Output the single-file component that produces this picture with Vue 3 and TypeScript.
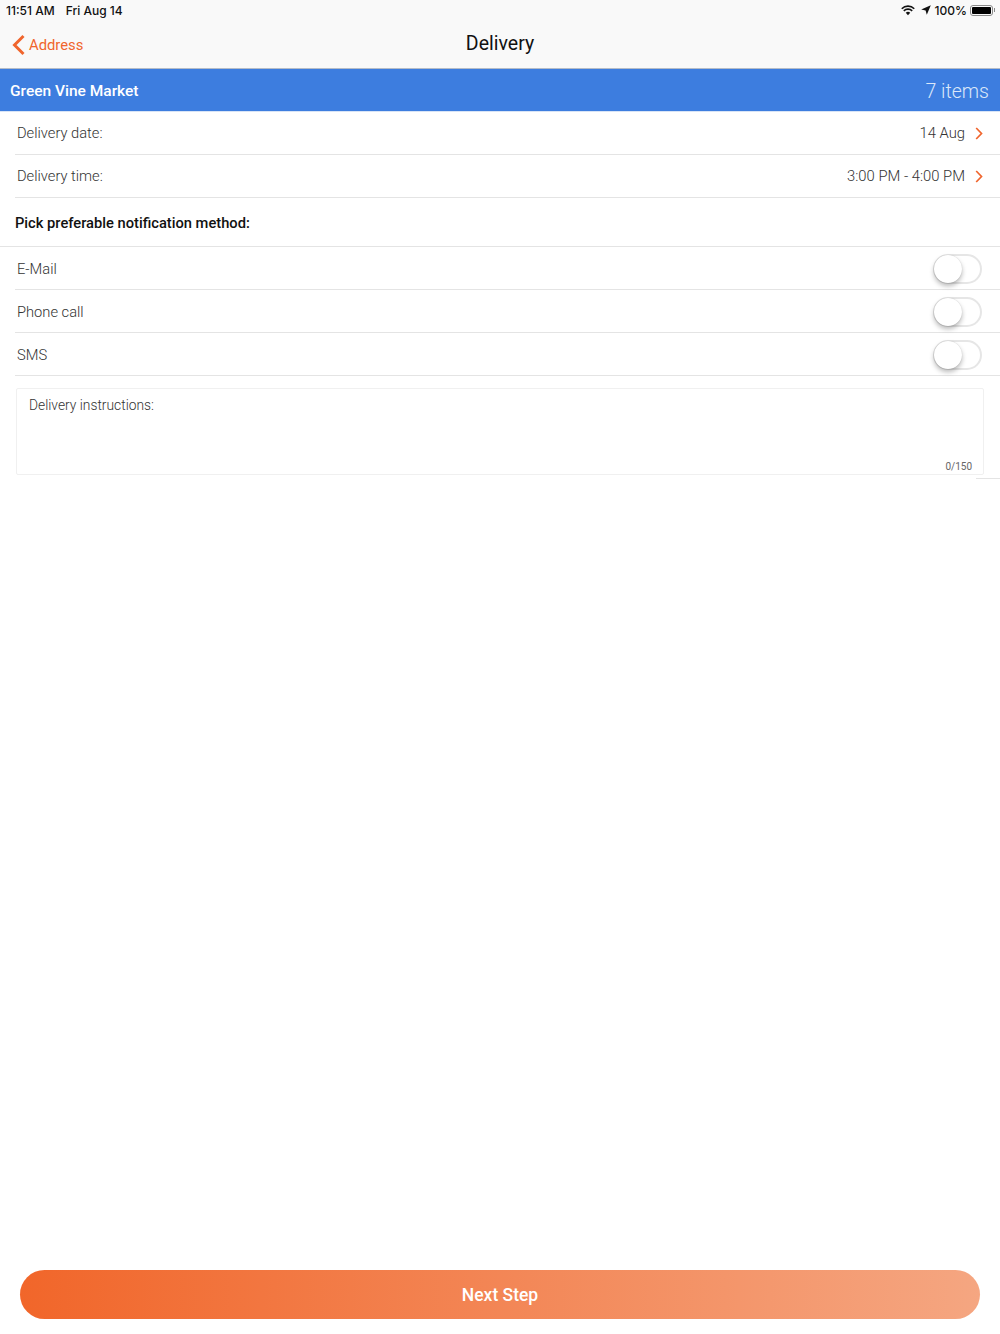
<script setup lang="ts">
interface PickerRow {
  label: string
  value: string
}

const pickers: PickerRow[] = [
  { label: 'Delivery date:', value: '14 Aug' },
  { label: 'Delivery time:', value: '3:00 PM - 4:00 PM' },
]

const methods: string[] = ['E-Mail', 'Phone call', 'SMS']
</script>

<template>
  <div class="page">
    <div class="top-bar">
      <div class="status-bar">
        <div class="status-left">
          <span>11:51 AM</span>
          <span>Fri Aug 14</span>
        </div>
        <div class="status-right">
          <svg width="14" height="11" viewBox="0 0 15 11">
            <path d="M0.8 3.6a9.5 9.5 0 0 1 13.4 0" fill="none" stroke="#111" stroke-width="1.7" />
            <path d="M3 5.9a6.4 6.4 0 0 1 9 0" fill="none" stroke="#111" stroke-width="1.7" />
            <path d="M5.1 8a3.4 3.4 0 0 1 4.8 0L7.5 10.6z" fill="#111" />
          </svg>
          <svg class="arrow" width="10" height="10" viewBox="0 0 10 10">
            <path d="M9.8 0.2L5.8 9.8 4.6 5.4 0.2 4.4z" fill="#111" />
          </svg>
          <span class="battery-text">100%</span>
          <div class="battery"><div class="battery-fill"></div></div>
          <div class="battery-cap"></div>
        </div>
      </div>
      <div class="nav-bar">
        <div class="back">
          <svg width="15" height="22" viewBox="0 0 15 22">
            <path d="M12.5 2L3.5 11l9 9" fill="none" stroke="#f0652d" stroke-width="3" />
          </svg>
          <span>Address</span>
        </div>
        <div class="nav-title">Delivery</div>
      </div>
    </div>

    <div class="store-bar">
      <span class="store-name">Green Vine Market</span>
      <span class="store-count">7 items</span>
    </div>

    <div v-for="row in pickers" :key="row.label" class="row row-picker">
      <span>{{ row.label }}</span>
      <div class="row-value">
        <span>{{ row.value }}</span>
        <svg width="8" height="13" viewBox="0 0 8 13">
          <path d="M1.2 1l5.3 5.5-5.3 5.5" fill="none" stroke="#f0652d" stroke-width="1.7" />
        </svg>
      </div>
    </div>

    <div class="section-title">Pick preferable notification method:</div>

    <div v-for="method in methods" :key="method" class="row row-switch">
      <span>{{ method }}</span>
      <div class="switch"><div class="knob"></div></div>
    </div>

    <div class="notes">
      <div class="notes-label">Delivery instructions:</div>
      <div class="notes-count">0/150</div>
    </div>
    <div class="notes-line"></div>

    <button class="next-btn">Next Step</button>
  </div>
</template>

<style>
html,
body {
  margin: 0;
  background: #fff;
}
</style>

<style scoped>
.page {
  height: 1334px;
  display: flex;
  flex-direction: column;
  background: #fff;
  font-family: Roboto, "Liberation Sans", sans-serif;
  color: #333;
  overflow: hidden;
}

.top-bar {
  height: 68px;
  flex-shrink: 0;
  background: #f9f9f9;
  border-bottom: 1px solid #b4bcc8;
}

.status-bar {
  height: 20px;
  display: flex;
  justify-content: space-between;
  align-items: center;
  padding: 0 5px 0 6px;
  font-family: Inter, "Liberation Sans", sans-serif;
  font-size: 12px;
  font-weight: 500;
  color: #111;
}

.status-left {
  display: flex;
  gap: 11px;
}

.status-right {
  display: flex;
  align-items: center;
}

.arrow {
  margin-left: 6px;
}

.battery-text {
  margin-left: 4px;
  font-size: 12px;
}

.battery {
  width: 23px;
  height: 11px;
  margin-left: 3px;
  padding: 1px;
  box-sizing: border-box;
  border: 1px solid #8a8a8a;
  border-radius: 3px;
}

.battery-fill {
  height: 100%;
  background: #000;
  border-radius: 1px;
}

.battery-cap {
  width: 1px;
  height: 4px;
  margin-left: 1px;
  background: #8a8a8a;
}

.nav-bar {
  height: 48px;
  position: relative;
  display: flex;
  align-items: center;
  justify-content: center;
}

.back {
  position: absolute;
  left: 11px;
  top: 14px;
  display: flex;
  align-items: center;
  gap: 3px;
  font-size: 14.8px;
  font-weight: 400;
  color: #f0652d;
}

.nav-title {
  margin-top: -1px;
  font-size: 19.5px;
  font-weight: 400;
  color: #111;
}

.store-bar {
  height: 43px;
  flex-shrink: 0;
  box-sizing: border-box;
  display: flex;
  justify-content: space-between;
  align-items: center;
  padding: 1px 11px 0 10px;
  background: #3d7ddf;
  color: #fff;
  border-bottom: 1px solid #d8e4f6;
}

.store-name {
  font-size: 15.5px;
  font-weight: 500;
}

.store-count {
  margin-top: 1px;
  font-size: 19.5px;
  font-weight: 300;
  color: #dbe7f9;
}

.row {
  height: 43px;
  flex-shrink: 0;
  box-sizing: border-box;
  display: flex;
  justify-content: space-between;
  align-items: center;
  margin-left: 15px;
  padding: 1px 17px 0 2px;
  border-bottom: 1px solid #e4e4e4;
  font-size: 14.7px;
  font-weight: 300;
}

.row-picker {
  padding-top: 0;
}

.row-value {
  display: flex;
  align-items: center;
  gap: 9px;
  font-size: 14.8px;
}

.row-value span {
  margin-right: 1px;
}

.row-switch {
  padding-right: 18px;
}

.section-title {
  height: 49px;
  flex-shrink: 0;
  box-sizing: border-box;
  padding: 16px 0 0 15px;
  border-bottom: 1px solid #e4e4e4;
  font-size: 14.7px;
  font-weight: 500;
  color: #111;
}

.switch {
  width: 49px;
  height: 30px;
  box-sizing: border-box;
  border: 2px solid #e6e6e6;
  border-radius: 15px;
  position: relative;
}

.knob {
  position: absolute;
  left: -1px;
  top: -1px;
  width: 28px;
  height: 28px;
  border-radius: 50%;
  background: #fff;
  box-shadow: 0 3px 5px rgba(0, 0, 0, 0.28), 0 0 1px rgba(0, 0, 0, 0.2);
}

.notes {
  height: 87px;
  flex-shrink: 0;
  box-sizing: border-box;
  margin: 12px 16px 0;
  padding: 8px 11px 9px 12px;
  border: 1px solid #f0f0f0;
  border-radius: 2px;
  display: flex;
  flex-direction: column;
  justify-content: space-between;
  font-size: 13.8px;
}

.notes-label {
  font-weight: 300;
  color: #333;
}

.notes-count {
  align-self: flex-end;
  margin-bottom: -7px;
  font-size: 10px;
  color: #666;
}

.notes-line {
  height: 1px;
  margin: 3px 0 0 976px;
  background: #e4e4e4;
}

.next-btn {
  height: 49px;
  flex-shrink: 0;
  margin: auto 20px 15px;
  padding: 1px 0 0;
  border: none;
  border-radius: 25px;
  background: linear-gradient(90deg, #f1662a, #f5a681);
  color: #fff;
  font-family: inherit;
  font-size: 17.5px;
  font-weight: 500;
}
</style>
